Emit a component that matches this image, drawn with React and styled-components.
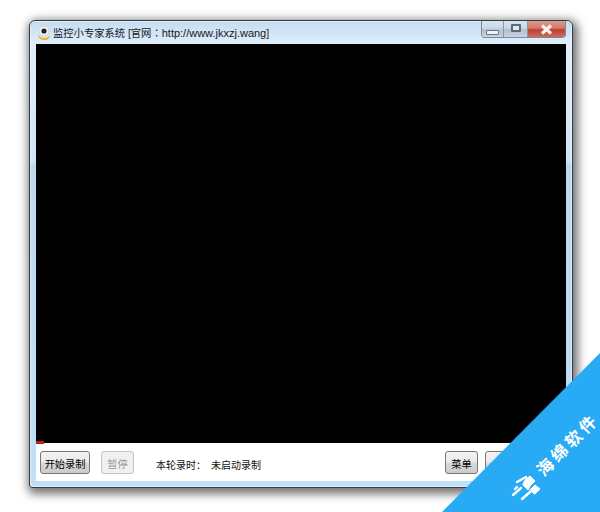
import React from 'react'
import styled, { createGlobalStyle } from 'styled-components'

const Global = createGlobalStyle`
    html, body { margin: 0; padding: 0; background: #fff; }
    body { width: 600px; height: 512px; overflow: hidden; font-family: "Liberation Sans", "Noto Sans CJK SC", sans-serif; }
`
const Page = styled.div`
    position: relative;
    width: 600px;
    height: 512px;
    padding: 20px 0 0 29px;
    box-sizing: border-box;
    overflow: hidden;
`
const Win = styled.div`
    width: 544px;
    height: 468px;
    box-sizing: border-box;
    display: flex;
    flex-direction: column;
    border: 1px solid #333a40;
    border-radius: 6px 6px 3px 3px;
    padding: 0 6px 6px;
    background: linear-gradient(180deg, #c4dcf2 0%, #e0eefa 5%, #cfe4f6 30%, #bcd8f0 31%, #bfe0f8 100%);
    box-shadow: 0 0 0 1px rgba(255,255,255,.5) inset, 2px 3px 10px 3px rgba(0,0,0,.55);
`
const TitleBar = styled.div`
    height: 23px;
    display: flex;
    align-items: flex-start;
    flex-shrink: 0;
`
const AppIcon = styled.svg`
    width: 14px;
    height: 15px;
    margin: 4px 2px 0 1px;
    flex-shrink: 0;
`
const TitleText = styled.div`
    font-size: 10.3px;
    line-height: 14px;
    margin-top: 5px;
    color: #15181d;
    white-space: nowrap;
`
const Url = styled.span`
    font-size: 11px;
`
const Colon = styled.span`
    font-family: "Noto Sans CJK TC", sans-serif;
`
const Caption = styled.div`
    margin-left: auto;
    display: flex;
    height: 16px;
    border: 1px solid #7b8a9a;
    border-top: none;
    border-radius: 0 0 4px 4px;
    overflow: hidden;
`
const CapBtn = styled.div`
    width: ${p => p.$w}px;
    display: flex;
    align-items: center;
    justify-content: center;
    background: ${p => p.$close
        ? 'linear-gradient(180deg, #dc9c90 0%, #d2776a 45%, #bd3f32 55%, #cf6a58 100%)'
        : 'linear-gradient(180deg, #d9e5f0 0%, #c8d7e5 45%, #b0c1d2 55%, #c4d4e2 100%)'};
    & + & { border-left: 1px solid #87989f; }
`
const MinGlyph = styled.div`
    width: 11px;
    height: 3px;
    margin-top: 6px;
    background: #eef3f7;
    border: 1px solid #66747f;
    border-radius: 1px;
`
const MaxGlyph = styled.div`
    width: 10px;
    height: 8px;
    margin-top: -3px;
    box-sizing: border-box;
    background: #dfe8f0;
    border: 2px solid #5b6875;
    border-radius: 1px;
`
const Video = styled.div`
    position: relative;
    flex: 1;
    background: #000;
`
const Progress = styled.div`
    position: absolute;
    left: 0;
    bottom: -1px;
    width: 8px;
    height: 3px;
    background: #b8201a;
`
const Footer = styled.div`
    height: 38px;
    flex-shrink: 0;
    display: flex;
    align-items: center;
    padding: 5px 0 4px 4px;
    box-sizing: border-box;
    background: #fff;
    font-size: 10px;
    color: #111;
`
const Btn = styled.div`
    width: ${p => p.$w}px;
    height: 23px;
    box-sizing: border-box;
    margin-left: ${p => p.$ml || 0}px;
    padding-top: 1px;
    display: flex;
    align-items: center;
    justify-content: center;
    border: 1px solid ${p => p.$off ? '#c4c4c4' : '#777'};
    border-radius: 3px;
    background: ${p => p.$off ? '#f0f0f0' : 'linear-gradient(180deg, #f2f2f2 0%, #ebebeb 45%, #d8d8d8 55%, #cbcbcb 100%)'};
    color: ${p => p.$off ? '#9a9a9a' : '#000'};
    font-size: 10.2px;
    white-space: nowrap;
`
const Label = styled.span`
    margin-left: ${p => p.$ml}px;
    padding-top: 3px;
    white-space: nowrap;
`
const Triangle = styled.div`
    position: absolute;
    right: 0;
    bottom: 0;
    width: 158px;
    height: 159px;
    background: #29aaf4;
    clip-path: polygon(100% 0, 100% 100%, 0 100%);
`
const Brand = styled.div`
    position: absolute;
    left: 519px;
    top: 434px;
    color: #fff;
    font-family: "Noto Sans CJK SC", sans-serif;
    font-weight: 700;
    font-size: 16.5px;
    line-height: 20px;
    letter-spacing: 3.5px;
    white-space: nowrap;
    transform: translateX(8px) rotate(-45deg);
    transform-origin: center;
`
const BrandLogo = styled.svg`
    position: absolute;
    left: 511px;
    top: 473px;
    width: 30px;
    height: 30px;
`

const App = () => {
    return (
        <Page>
            <Global />
            <Win>
                <TitleBar>
                    <AppIcon viewBox="0 0 14 15">
                        <path d="M1 9c1 4 9 6 12 1-1 5-3 5-6 5S1 13 1 9z" fill="#e8b52a" />
                        <circle cx="7" cy="6" r="5" fill="#f2f2f2" stroke="#c4c4c4" strokeWidth=".6" />
                        <circle cx="7" cy="6" r="2.6" fill="#20242c" />
                    </AppIcon>
                    <TitleText>监控小专家系统 [官网<Colon>：</Colon><Url>http://www.jkxzj.wang</Url>]</TitleText>
                    <Caption>
                        <CapBtn $w={21}><MinGlyph /></CapBtn>
                        <CapBtn $w={23}><MaxGlyph /></CapBtn>
                        <CapBtn $w={37} $close>
                            <svg width="13" height="11" viewBox="0 0 13 11">
                                <path d="M2 1.5l9 8M11 1.5l-9 8" stroke="#f6f0ee" strokeWidth="3.2" />
                            </svg>
                        </CapBtn>
                    </Caption>
                </TitleBar>
                <Video><Progress /></Video>
                <Footer>
                    <Btn $w={50}>开始录制</Btn>
                    <Btn $w={33} $ml={11} $off>暂停</Btn>
                    <Label $ml={22}>本轮录时：</Label>
                    <Label $ml={5}>未启动录制</Label>
                    <Btn $w={33} $ml={184}>菜单</Btn>
                    <Btn $w={33} $ml={7} />
                </Footer>
            </Win>
            <Triangle />
            <Brand>海绵软件</Brand>
            <BrandLogo viewBox="0 0 30 30">
                <g stroke="#fff" strokeLinecap="round" fill="none">
                    <path d="M6 9l9-5M2 22l8-7M6 14l-2 2M11 26l8-7" strokeWidth="2.4" />
                    <path d="M14 7l5-4 5 5-5 5 -2 4-5-5zM19 17l5-5 5 4-5 5z" fill="#fff" strokeWidth="1" />
                </g>
            </BrandLogo>
        </Page>
    )
}

export default App
